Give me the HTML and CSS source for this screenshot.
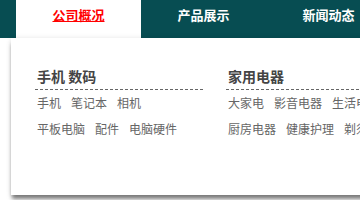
FILE: index.html
```html
<!DOCTYPE html>
<html lang="zh">
<head>
<meta charset="utf-8">
<title>导航</title>
<link rel="stylesheet" href="styles.css">
</head>
<body>
<div class="page">
  <nav class="nav">
    <a class="nav-item active" href="#">公司概况</a>
    <a class="nav-item" href="#">产品展示</a>
    <a class="nav-item" href="#">新闻动态</a>
  </nav>
  <div class="dropdown">
    <div class="col">
      <h3 class="col-title">手机 数码</h3>
      <div class="row"><a href="#">手机</a><a href="#">笔记本</a><a href="#">相机</a></div>
      <div class="row"><a href="#">平板电脑</a><a href="#">配件</a><a href="#">电脑硬件</a></div>
    </div>
    <div class="col">
      <h3 class="col-title">家用电器</h3>
      <div class="row"><a href="#">大家电</a><a href="#">影音电器</a><a href="#">生活电器</a></div>
      <div class="row"><a href="#">厨房电器</a><a href="#">健康护理</a><a href="#">剃须刀</a></div>
    </div>
  </div>
</div>
</body>
</html>
```
FILE: styles.css
```css
html, body {
  margin: 0;
  padding: 0;
  overflow: hidden;
  background: #fff;
  font-family: "Noto Sans CJK SC", "Noto Sans", sans-serif;
}
.page {
  position: relative;
  width: 360px;
  height: 200px;
  overflow: hidden;
}
.nav {
  display: flex;
  height: 38px;
  padding-left: 16px;
  background: #074d52;
}
.nav-item {
  flex: 0 0 125px;
  text-align: center;
  font-size: 13px;
  font-weight: bold;
  line-height: 29px;
  color: #fff;
  text-decoration: none;
}
.nav-item.active {
  background: #fff;
  color: #f00;
  text-decoration: underline;
}
.dropdown {
  position: absolute;
  left: 11px;
  top: 38px;
  width: 420px;
  height: 157px;
  box-sizing: border-box;
  padding: 28px 24px;
  background: #fff;
  display: flex;
  gap: 23px;
  box-shadow: 0 5px 4px -1px rgba(0, 0, 0, 0.5), 0 0 5px rgba(0, 0, 0, 0.1);
}
.col {
  flex: 0 0 168px;
}
.col-title {
  margin: 0;
  padding: 0 0 3px 2px;
  font-size: 14px;
  line-height: 20px;
  font-weight: bold;
  color: #444;
  border-bottom: 1px dashed #666;
  white-space: nowrap;
}
.row {
  display: flex;
  gap: 10px;
  padding-left: 2px;
  white-space: nowrap;
}
.row:first-of-type {
  margin-top: 0;
}
.row a {
  font-size: 12px;
  line-height: 26px;
  color: #666;
  text-decoration: none;
}
```
